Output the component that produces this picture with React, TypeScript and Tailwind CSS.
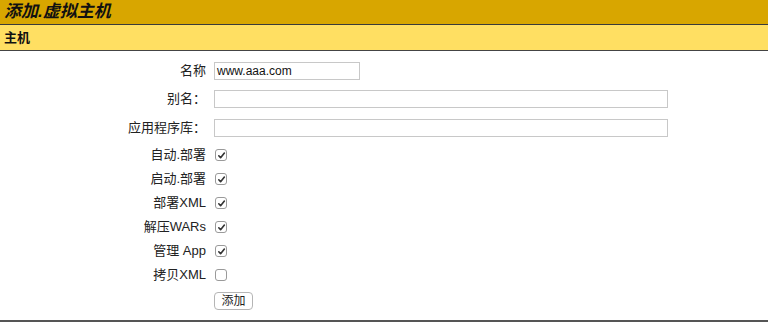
const font = { fontFamily: '"Liberation Sans", "Noto Sans CJK SC", sans-serif' };

function Check({ checked }: { checked: boolean }) {
  return (
    <span className="flex h-[12px] w-[12px] items-center justify-center rounded-[3px] border border-[#9a9a9a] bg-white">
      {checked && (
        <svg width={9} height={9} viewBox="0 0 10 10" fill="none" stroke="#333" strokeWidth={1.8} strokeLinecap="round" strokeLinejoin="round">
          <path d="M2 5.3l2 2.2L8.2 2.3" />
        </svg>
      )}
    </span>
  );
}

const checks: [string, boolean][] = [
  ['自动.部署', true],
  ['启动.部署', true],
  ['部署XML', true],
  ['解压WARs', true],
  ['管理 App', true],
  ['拷贝XML', false],
];

export default function App() {
  return (
    <div className="h-[322px] w-[768px] bg-white text-[#222]" style={font}>
      <div className="flex h-[24px] items-center bg-[#d8a600] px-[4px] text-[17px] font-bold italic text-[#111] border-b border-[#3a3a3a] box-content">
        添加.虚拟主机
      </div>
      <div className="flex h-[25px] items-center bg-[#ffdf62] px-[4px] text-[13px] font-bold text-[#111] border-b border-[#444] box-content">
        主机
      </div>
      <div className="grid grid-cols-[206px_1fr] gap-x-2 pt-[6px] pb-[5px] text-[13px] border-b-2 border-[#555]">
        <div className="flex h-[28px] items-center justify-end">名称</div>
        <div className="flex h-[28px] items-center">
          <div className="flex h-[18px] w-[146px] items-center border border-[#c8c8c8] px-[2px] text-[12px] text-[#111]">www.aaa.com</div>
        </div>
        <div className="flex h-[28px] items-center justify-end">别名：</div>
        <div className="flex h-[28px] items-center">
          <div className="h-[18px] w-[454px] border border-[#c8c8c8]" />
        </div>
        <div className="flex h-[30px] items-center justify-end">应用程序库：</div>
        <div className="flex h-[30px] items-center">
          <div className="h-[18px] w-[454px] border border-[#c8c8c8]" />
        </div>
        {checks.map(([label, on]) => (
          <div key={label} className="contents">
            <div className="flex h-[24px] items-center justify-end">{label}</div>
            <div className="flex h-[24px] items-center pl-[1px]">
              <Check checked={on} />
            </div>
          </div>
        ))}
        <div className="h-[28px]" />
        <div className="flex h-[28px] items-center">
          <span className="flex h-[18px] w-[39px] items-center justify-center rounded-[4px] border border-[#b5b5b5] bg-white text-[12px] text-[#222]">添加</span>
        </div>
      </div>
    </div>
  );
}
